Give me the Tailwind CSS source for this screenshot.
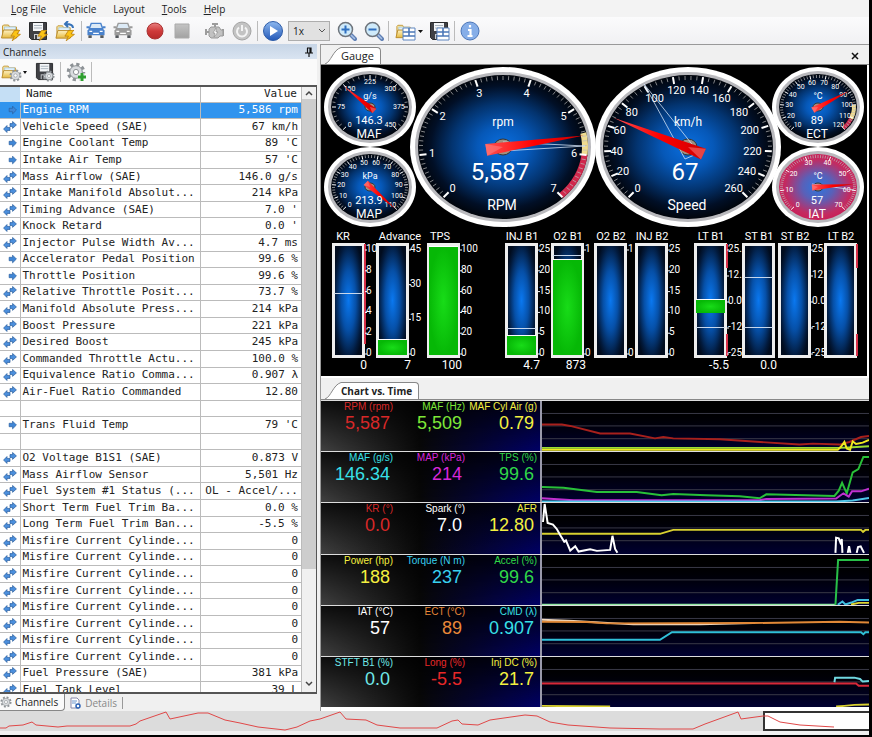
<!DOCTYPE html>
<html lang="en">
<head>
    <meta charset="UTF-8">
    <meta name="viewport" content="width=device-width, initial-scale=1.0">
    <title>Engine Scanner</title>
    <script src="https://cdn.jsdelivr.net/npm/@tailwindcss/browser@4"></script>
</head>
<body class="bg-black pr-[3px] pb-[2px] min-h-screen flex flex-col font-['Open_Sans',sans-serif] text-[10px] leading-4 text-[#222]">

    <!-- Shared icons -->
    <svg class="absolute w-0 h-0">
        <defs>
            <linearGradient id="folderFill" x2="0" y2="1"><stop stop-color="#fff3c4"/><stop offset="1" stop-color="#e5b93f"/></linearGradient>
            <linearGradient id="blueFill" x2="0" y2="1"><stop stop-color="#8db8ef"/><stop offset="1" stop-color="#2358b8"/></linearGradient>
            <linearGradient id="redFill" x2="0" y2="1"><stop stop-color="#e88080"/><stop offset=".5" stop-color="#cf3a3a"/><stop offset="1" stop-color="#b52a2a"/></linearGradient>
            <linearGradient id="grayFill" x2="0" y2="1"><stop stop-color="#c4c4c4"/><stop offset="1" stop-color="#a2a2a2"/></linearGradient>
            <symbol id="folder" viewBox="0 0 20 20">
                <path d="M2 17V5l1-1h5l1 2h7v4" fill="#f4e3a4" stroke="#c49a3c"/>
                <path d="M4 6h11v6H4z" fill="#dff0fb" stroke="#9cc3dc" stroke-width=".7"/>
                <path d="M1 17l2-8h15l-2 8z" fill="url(#folderFill)" stroke="#b98c2c"/>
            </symbol>
            <symbol id="floppy" viewBox="0 0 20 20">
                <path d="M1.500 1.500h17v17h-15l-2-2z" fill="#3f4044" stroke="#292a2c"/>
                <path d="M5 2h10v8H5z" fill="#f4f6f8"/>
                <path d="M6 4.500h8M6 7h8" stroke="#a9b3bd"/>
                <path d="M6 13h8v5H6z" fill="#c9ccd0"/>
                <path d="M7 14h2v4H7z" fill="#3f4044"/>
            </symbol>
            <symbol id="bolt" viewBox="0 0 10 10">
                <path d="M4 .5L9 0 6.500 3.500 9.500 4 2 9.800 4 5.500 .8 5.600z" fill="#fbc417" stroke="#b67a0c" stroke-width=".7"/>
            </symbol>
            <symbol id="gear" viewBox="0 0 20 20">
                <circle cx="10" cy="10" r="7.500" fill="none" stroke="#8d9296" stroke-width="3.500" stroke-dasharray="3.100 2.790"/>
                <circle cx="10" cy="10" r="6.300" fill="#d9dcdf" stroke="#8d9296"/>
                <circle cx="10" cy="10" r="2.600" fill="#fff" stroke="#8d9296"/>
            </symbol>
            <symbol id="car" viewBox="0 0 20 20">
                <path d="M5 2.500h10l2 5.500H3z" fill="#dceaf6" stroke="currentColor" stroke-width="1.500"/>
                <path d="M3 8h14l2 2v5H1v-5z" fill="currentColor"/>
                <path d="M0 6.500h3M17 6.500h3" stroke="currentColor" stroke-width="2"/>
                <path d="M3 11h3M14 11h3M7 13h6" stroke="#fff" stroke-width="1.400"/>
                <path d="M2 15h3.500v3H2zM14.500 15H18v3h-3.500z" fill="#55595e"/>
            </symbol>
            <symbol id="layout" viewBox="0 0 14 14">
                <path d="M1 1h12v12H1z" fill="#fff" stroke="#5f86bf"/>
                <path d="M1 5h12M1 9h12M7 1v8" stroke="#4c78b8" stroke-width="1.600"/>
            </symbol>
            <symbol id="lens" viewBox="0 0 20 20">
                <path d="M13 13l5 5" stroke="#5f7fb4" stroke-width="4" stroke-linecap="round"/>
                <path d="M14 14l3.500 3.500" stroke="#a9c1e6" stroke-width="1.500" stroke-linecap="round"/>
                <circle cx="8.500" cy="8.500" r="7" fill="#cfeafa" stroke="#6e747c" stroke-width="1.500"/>
            </symbol>
            <symbol id="one" viewBox="0 0 16 14">
                <path d="M7 5h4V2.500L15.500 7 11 11.500V9H7z" fill="#3f86d6" stroke="#2b5f9f" stroke-width=".8"/>
            </symbol>
            <symbol id="two" viewBox="0 0 16 14">
                <path d="M8 3h3V.600L15.500 4.600 11 8.600V6.500H8z" fill="#4b8fdd" stroke="#255a9a" stroke-width=".8"/>
                <path d="M8 7.500H4.500V5.300L.5 9.400l4 4V11H8z" fill="#4b8fdd" stroke="#255a9a" stroke-width=".8"/>
            </symbol>
        </defs>
    </svg>

    <!-- Menu -->
    <nav class="bg-[#f3f3f3] h-[17px] flex items-center gap-[17px] pl-[11px]">
        <button><u>L</u>og File</button>
        <button>Vehicle</button>
        <button>Layout</button>
        <button><u>T</u>ools</button>
        <button><u>H</u>elp</button>
    </nav>

    <!-- Main toolbar -->
    <div class="bg-gradient-to-b from-[#fbfbfc] to-[#f1f1f3] h-[27px] flex items-center gap-[3px]">
        <button class="w-6" aria-label="Open log"><svg class="w-6 h-5" viewBox="0 0 24 20"><use href="#folder" x="0" y="0" width="21" height="20"/><use href="#bolt" x="10" y="9" width="11" height="11"/></svg></button>
        <button class="w-6" aria-label="Save log"><svg class="w-6 h-5" viewBox="0 0 24 20"><use href="#floppy" x="1" y="0" width="20" height="20"/><use href="#bolt" x="10" y="9" width="11" height="11"/></svg></button>
        <button class="w-6" aria-label="Close log"><svg class="w-6 h-5" viewBox="0 0 24 20"><use href="#folder" x="0" y="1" width="21" height="19"/><use href="#bolt" x="10" y="9" width="11" height="11"/><path d="M19 7c0-4-4-4-7-4M14 0l-3 3 3 3" fill="none" stroke="#3672b8" stroke-width="2"/></svg></button>
        <span class="w-px h-5 bg-[#bbb]"></span>
        <button class="w-6 text-[#4a82cc]" aria-label="Connect"><svg class="w-6 h-5"><use href="#car" width="22" height="19"/></svg></button>
        <button class="w-6 text-[#9b9b9b]" aria-label="Disconnect"><svg class="w-6 h-5"><use href="#car" width="22" height="19"/></svg></button>
        <button class="w-6 ml-1" aria-label="Record"><svg class="w-6 h-5" viewBox="0 0 24 20"><circle cx="12" cy="10" r="8" fill="url(#redFill)" stroke="#a33"/></svg></button>
        <button class="w-6" aria-label="Stop"><svg class="w-6 h-5" viewBox="0 0 24 20"><path d="M5 3h14v14H5z" fill="url(#grayFill)" stroke="#aaa"/></svg></button>
        <button class="w-6 ml-1.5" aria-label="Engine"><svg class="w-6 h-5" viewBox="0 0 24 20"><path d="M9 3h6M12 3v3M3 8v6M3 11h3M20 8v7" stroke="#9c9c9c" stroke-width="2"/><path d="M6 8l2-2h8l2 3h2v6h-3l-2 2H8l-2-2z" fill="#c2c2c2" stroke="#999"/><path d="M13 7l-3 5h2l-1 4 4-5h-2z" fill="#fff" stroke="#888" stroke-width=".6"/></svg></button>
        <button class="w-6" aria-label="Power"><svg class="w-6 h-5" viewBox="0 0 24 20"><circle cx="12" cy="10" r="9" fill="#c3c3c3" stroke="#a4a4a4"/><path d="M12 4v6M9 6.500a5 5 0 1 0 6 0" fill="none" stroke="#f4f4f4" stroke-width="2"/></svg></button>
        <span class="w-px h-5 bg-[#bbb]"></span>
        <button class="w-6" aria-label="Play"><svg class="w-6 h-5" viewBox="0 0 24 20"><circle cx="12" cy="10" r="9.500" fill="url(#blueFill)" stroke="#2f5da8"/><path d="M9 5v10l8-5z" fill="#fff"/></svg></button>
        <div class="relative w-[42px] h-5">
            <select aria-label="Speed" class="appearance-none w-full h-full bg-[#e1e1e1] border border-[#adadad] pl-1 text-[10px] leading-4"><option>1x</option></select>
            <svg class="absolute right-1 top-1.5 w-2 h-2" viewBox="0 0 8 8"><path d="M1 2l3 3 3-3" fill="none" stroke="#555"/></svg>
        </div>
        <button class="w-6 ml-px" aria-label="Zoom in"><svg class="w-6 h-5" viewBox="0 0 24 20"><use href="#lens" x="3" width="20" height="20"/><path d="M7.500 8.500h8M11.500 4.500v8" stroke="#2f6fc0" stroke-width="2"/></svg></button>
        <button class="w-6" aria-label="Zoom out"><svg class="w-6 h-5" viewBox="0 0 24 20"><use href="#lens" x="3" width="20" height="20"/><path d="M7.500 8.500h8" stroke="#2f6fc0" stroke-width="2"/></svg></button>
        <span class="w-px h-5 bg-[#bbb]"></span>
        <button class="w-8" aria-label="Open layout"><svg class="w-8 h-5" viewBox="0 0 32 20"><use href="#folder" x="3" width="19" height="20"/><use href="#layout" x="10" y="6" width="14" height="14"/><path d="M26 9h5l-2.500 3z" fill="#111"/></svg></button>
        <button class="w-6" aria-label="Save layout"><svg class="w-6 h-5" viewBox="0 0 24 20"><use href="#floppy" x="2" width="20" height="20"/><use href="#layout" x="9" y="6" width="14" height="14"/></svg></button>
        <span class="w-px h-5 bg-[#bbb]"></span>
        <button class="w-6" aria-label="About"><svg class="w-6 h-5" viewBox="0 0 24 20"><circle cx="12" cy="10" r="9" fill="#86aee8" stroke="#4c76b8"/><path d="M12 4v2.500M10 9h2.500v6M9.500 15h5" fill="none" stroke="#fff" stroke-width="2.200"/></svg></button>
    </div>

    <main class="flex-1 flex bg-[#f0f0f0]">
        <!-- Channels panel -->
        <section class="w-[317px] shrink-0 flex flex-col">
            <header class="h-[15px] flex items-center justify-between bg-gradient-to-b from-[#c7d5e6] to-[#d9e4f1] pl-[3px] pr-1">
                <h2>Channels</h2>
                <button aria-label="Pin"><svg class="w-2 h-2.5" viewBox="0 0 8 10"><path d="M2 1h4v5M2.500 1v5M0 6h8M4 6v4M5 1v5" fill="none" stroke="#111" stroke-width="1.200"/></svg></button>
            </header>
            <div class="h-[26px] bg-[#fafafa] flex items-center gap-[3px]">
                <button class="w-[30px]" aria-label="Open channels"><svg class="w-[30px] h-5" viewBox="0 0 30 20"><use href="#folder" x="1" width="18" height="19"/><use href="#gear" x="9" y="7" width="13" height="13"/><path d="M23 9h4l-2 3z" fill="#111"/></svg></button>
                <button class="w-6" aria-label="Save channels"><svg class="w-6 h-5" viewBox="0 0 24 20"><use href="#floppy" x="2" width="19" height="19"/><use href="#gear" x="10" y="8" width="12" height="12"/></svg></button>
                <span class="w-px h-5 bg-[#bbb]"></span>
                <button class="w-6" aria-label="Add channel"><svg class="w-6 h-5" viewBox="0 0 24 20"><use href="#gear" x="2" width="20" height="20"/><path d="M18 11v8M14 15h8" stroke="#fff" stroke-width="5"/><path d="M18 11v8M14 15h8" stroke="#2f9e2f" stroke-width="3"/></svg></button>
                <span class="w-px h-5 bg-[#bbb]"></span>
            </div>
            <div class="h-[609px] flex bg-white border-y-2 border-r border-[#555] overflow-hidden">
                <div class="flex-1 overflow-hidden">
                    <table class="w-full h-[612px] table-fixed border-collapse font-['DejaVu_Sans_Mono',monospace] text-[11px] leading-[14px]">
                        <thead>
                            <tr class="h-[15px]">
                                <th class="w-5 p-0 bg-[#c5dff5]"></th>
                                <th class="p-0 text-left font-normal pl-[6px] border-b border-r border-[#bbb]">Name</th>
                                <th class="p-0 w-[101px] text-right font-normal pr-1 border-b border-r border-[#bbb]">Value</th>
                            </tr>
                        </thead>
                        <tbody id="channels"></tbody>
                    </table>
                </div>
                <div class="w-[14px] bg-[#f0f0f0] flex flex-col">
                    <button class="h-3 flex justify-center items-center" aria-label="Scroll up"><svg class="w-2 h-2" viewBox="0 0 8 8"><path d="M1 6l3-3 3 3" fill="none" stroke="#444" stroke-width="1.500"/></svg></button>
                    <div class="h-[470px] bg-[#cdcdcd]"></div>
                    <button class="mt-auto h-4 flex justify-center items-center" aria-label="Scroll down"><svg class="w-2 h-2" viewBox="0 0 8 8"><path d="M1 2l3 3 3-3" fill="none" stroke="#444" stroke-width="1.500"/></svg></button>
                </div>
            </div>
            <div class="h-[17px] flex items-center">
                <button class="h-full flex items-center gap-[3px] pr-[6px] bg-[#fafafa] border-r border-b border-[#888] rounded-br"><svg class="w-3 h-3"><use href="#gear"/></svg>Channels</button>
                <button class="flex items-center gap-[3px] px-[5px] text-[#888]"><svg class="w-3 h-3" viewBox="0 0 12 12"><path d="M1 1h6l2 2v8H1z" fill="#fff" stroke="#88a"/><path d="M2 4h5M2 6h4" stroke="#6a94cc"/><circle cx="8" cy="9" r="2" fill="#fff" stroke="#2c62b4" stroke-width="1.500"/></svg>Details</button>
                <span class="w-px h-3 bg-[#999]"></span>
            </div>
        </section>

        <!-- Gauges and charts -->
        <section class="flex-1 min-w-0 flex flex-col ml-[3px] border-l border-t border-[#999]">
            <div class="h-[20px] flex items-end border-b border-[#888] pl-1">
                <svg class="w-4 h-[17px]" viewBox="0 0 16 17"><path d="M0 17C6 15 8 3 16 .5V17z" fill="#fff"/><path d="M0 17C6 15 8 3 16 .5" fill="none" stroke="#888"/></svg>
                <button class="h-[17px] bg-white border-t border-r border-[#888] rounded-tr-sm pr-1.5 text-[11px]">Gauge</button>
                <button class="ml-auto mr-[10px] h-[17px]" aria-label="Close"><svg class="w-2 h-2" viewBox="0 0 8 8"><path d="M1 1l6 6M7 1L1 7" stroke="#111" stroke-width="1.500"/></svg></button>
            </div>
            <div class="bg-black border-r-2 border-b-2 border-white">
                <svg id="gauges" class="block w-full font-['Roboto',sans-serif]" viewBox="321 65 546 311" text-anchor="middle" fill="#fff">
                    <defs>
                        <radialGradient id="face"><stop stop-color="#0a6fe0"/><stop offset=".3" stop-color="#0658b8"/><stop offset=".6" stop-color="#033470"/><stop offset=".85" stop-color="#010f26"/><stop offset="1" stop-color="#01050c"/></radialGradient>
                        <radialGradient id="faceHot"><stop stop-color="#2a78e0"/><stop offset=".4" stop-color="#5a60b8"/><stop offset=".85" stop-color="#c42a60"/><stop offset="1" stop-color="#c82058"/></radialGradient>
                        <radialGradient id="tube" cx=".5" cy=".5" r=".6"><stop stop-color="#0a78f0"/><stop offset=".45" stop-color="#0650a8"/><stop offset=".85" stop-color="#021a3c"/><stop offset="1" stop-color="#010c1e"/></radialGradient>
                        <radialGradient id="level"><stop stop-color="#18dc18"/><stop offset="1" stop-color="#06b806"/></radialGradient>
                        <linearGradient id="needle"><stop stop-color="#ff5050"/><stop offset=".5" stop-color="#f00"/><stop offset="1" stop-color="#c00"/></linearGradient>
                    </defs>
                </svg>
            </div>
            <div class="h-[22px] flex items-end border-b border-[#888] pl-1">
                <svg class="w-4 h-[17px]" viewBox="0 0 16 17"><path d="M0 17C6 15 8 3 16 .5V17z" fill="#fff"/><path d="M0 17C6 15 8 3 16 .5" fill="none" stroke="#888"/></svg>
                <button class="h-[17px] bg-white border-t border-r border-[#888] rounded-tr-sm pr-1.5 font-bold">Chart vs. Time</button>
            </div>
            <div id="charts" class="grid grid-rows-6 h-[307px] bg-black font-['Liberation_Sans',sans-serif]"></div>
            <div class="flex-1 bg-white"></div>
        </section>
    </main>

    <!-- Log overview -->
    <footer class="bg-[#f0f0f0] pb-1">
        <svg class="block w-full h-5" viewBox="0 711 869 20" preserveAspectRatio="none">
            <path d="M0 711h869v20H0z" fill="#dcdcdc"/>
            <path d="M764 712h108v18H764z" fill="#fff" stroke="#333" stroke-width="2"/>
            <polyline fill="none" stroke="#e04848" points="0,728 6,728 9,726 23,725 32,722 36,725 58,727 67,726 130,726 136,724 140,721 166,712 170,719 198,713 208,713 225,720 240,723 258,727 285,730 297,727 310,721 320,719 340,712 346,719 366,720 377,725 400,728 437,728 452,721 458,720 462,724 478,725 490,720 525,715 537,716 550,722 568,725 610,728 660,729 693,729 705,724 738,712 741,719 763,716 768,716 780,722 800,725 834,727"/>
        </svg>
    </footer>

    <script>
        // Channel list: [icon, name, value]
        const channels = [
            ['one', 'Engine RPM', '5,586 rpm'],
            ['two', 'Vehicle Speed (SAE)', '67 km/h'],
            ['one', 'Engine Coolant Temp', "89 'C"],
            ['one', 'Intake Air Temp', "57 'C"],
            ['two', 'Mass Airflow (SAE)', '146.0 g/s'],
            ['two', 'Intake Manifold Absolut...', '214 kPa'],
            ['two', 'Timing Advance (SAE)', "7.0 '"],
            ['two', 'Knock Retard', "0.0 '"],
            ['two', 'Injector Pulse Width Av...', '4.7 ms'],
            ['one', 'Accelerator Pedal Position', '99.6 %'],
            ['one', 'Throttle Position', '99.6 %'],
            ['two', 'Relative Throttle Posit...', '73.7 %'],
            ['two', 'Manifold Absolute Press...', '214 kPa'],
            ['two', 'Boost Pressure', '221 kPa'],
            ['two', 'Desired Boost', '245 kPa'],
            ['two', 'Commanded Throttle Actu...', '100.0 %'],
            ['two', 'Equivalence Ratio Comma...', '0.907 λ'],
            ['two', 'Air-Fuel Ratio Commanded', '12.80'],
            ['', '', ''],
            ['one', 'Trans Fluid Temp', "79 'C"],
            ['', '', ''],
            ['two', 'O2 Voltage B1S1 (SAE)', '0.873 V'],
            ['two', 'Mass Airflow Sensor', '5,501 Hz'],
            ['two', 'Fuel System #1 Status (...', 'OL - Accel/...'],
            ['two', 'Short Term Fuel Trim Ba...', '0.0 %'],
            ['two', 'Long Term Fuel Trim Ban...', '-5.5 %'],
            ...Array(8).fill(['two', 'Misfire Current Cylinde...', '0']),
            ['two', 'Fuel Pressure (SAE)', '381 kPa'],
            ['two', 'Fuel Tank Level', '39 L']
        ];

        document.getElementById('channels').innerHTML = channels.map(([icon, name, value], i) => `
            <tr class="h-4 ${i === 0 ? 'bg-[#3194ee] text-white' : 'text-[#222]'}">
                <td class="p-0 border-b border-r border-[#bbb]">${icon ? `<svg class="block ml-[2px] w-4 h-3"><use href="#${icon}"/></svg>` : ''}</td>
                <td class="p-0 pl-[2px] border-b border-r border-[#bbb] whitespace-nowrap">${name}</td>
                <td class="p-0 pr-[3px] border-b border-r border-[#bbb] text-right whitespace-nowrap">${value}</td>
            </tr>`).join('');

        // Point on a dial: fraction 0..1 of the 270 degree sweep, at radii rx / ry
        function dialPoint(g, fraction, rx, ry) {
            const a = (135 + fraction * 270) * Math.PI / 180;
            return [g.cx + Math.cos(a) * rx, g.cy + Math.sin(a) * ry].map(n => +n.toFixed(1));
        }

        function arc(g, from, to, color) {
            const rx = g.rx - 3, ry = g.ry - 3;
            const [x1, y1] = dialPoint(g, from, rx, ry);
            const [x2, y2] = dialPoint(g, to, rx, ry);
            return `<path d="M${x1} ${y1}A${rx} ${ry} 0 0 1 ${x2} ${y2}" fill="none" stroke="${color}" stroke-width="${g.big ? 6 : 4}"/>`;
        }

        function needle(g, fraction) {
            const a = (135 + fraction * 270) * Math.PI / 180;
            const tail = g.big ? 17 : 6, half = g.big ? 6 : 3;
            const [tx, ty] = dialPoint(g, fraction, g.rx - 3, g.ry - 2);
            const bx = g.cx - Math.cos(a) * tail, by = g.cy - Math.sin(a) * tail;
            const dx = -Math.sin(a) * half, dy = Math.cos(a) * half;
            return `<polygon points="${tx},${ty} ${bx + dx},${by + dy} ${bx - dx},${by - dy}" fill="url(#needle)"/>
                <polygon points="${g.cx},${g.cy} ${bx + dx},${by + dy} ${bx - dx},${by - dy}" fill="#f88" fill-opacity=".5"/>`;
        }

        function drawDial(g) {
            g.rx = g.big ? 85 : 39;
            g.ry = g.big ? 72 : 33;
            const edge = g.big ? 8 : 7;
            let s = `<ellipse cx="${g.cx}" cy="${g.cy}" rx="${g.rx + edge}" ry="${g.ry + edge}" fill="#fff"/>
                <ellipse cx="${g.cx}" cy="${g.cy}" rx="${g.rx + 3}" ry="${g.ry + 3}" fill="#b9b9bd"/>
                <ellipse cx="${g.cx}" cy="${g.cy}" rx="${g.rx}" ry="${g.ry}" fill="url(#${g.face || 'face'})"/>`;
            (g.zones || []).forEach(z => s += arc(g, ...z));
            const steps = (g.labels.length - 1) * g.minor;
            for (let i = 0; i <= steps; i++) {
                const major = i % g.minor === 0;
                const len = g.big ? (major ? 7 : 4) : (major ? 4 : 3);
                const [x1, y1] = dialPoint(g, i / steps, g.rx - 1, g.ry - 1);
                const [x2, y2] = dialPoint(g, i / steps, g.rx - 1 - len, g.ry - 1 - len);
                s += `<path d="M${x1} ${y1}L${x2} ${y2}" stroke="${major ? '#fff' : '#bbb'}" stroke-width="${major && g.big ? 2 : 1}" stroke-opacity="${major ? 1 : .7}"/>`;
            }
            g.labels.forEach((label, i) => {
                const wide = g.big && String(label).length > 2 ? .08 : 0;
                const [x, y] = dialPoint(g, i / (g.labels.length - 1), g.rx * ((g.big ? .84 : .74) - wide), g.ry * (g.big ? .8 : .76));
                s += `<text x="${x}" y="${y}" dy="${g.big ? 4 : 2}" font-size="${g.big ? 11 : 7}">${label}</text>`;
            });
            s += `<text x="${g.cx}" y="${g.cy + (g.big ? -21 : -8)}" font-size="${g.big ? 12 : 9}">${g.unit}</text>`;
            s += `<ellipse cx="${g.cx}" cy="${g.cy}" rx="${g.big ? 9 : 5}" ry="${g.big ? 8 : 4}" fill="#a09080" stroke="#333"/>`;
            if (g.trail) s += `<path d="${g.trail}" fill="none" stroke="#cfe0f4" stroke-width=".8"/>`;
            s += needle(g, g.at);
            s += `<text x="${g.cx - (g.big ? 3 : 1)}" y="${g.cy + (g.big ? 33 : 17)}" font-size="${g.big ? 24 : 11}">${g.value}</text>`;
            s += `<text x="${g.cx - 1}" y="${g.cy + (g.big ? 63 : 31)}" font-size="${g.big ? 14 : 12}">${g.name}</text>`;
            return s;
        }

        const range = (from, to, step) => Array.from({ length: (to - from) / step + 1 }, (_, i) => from + i * step);

        const dials = [
            { name: 'MAF', unit: 'g/s', value: '146.3', at: .325, cx: 370, cy: 107, minor: 5, labels: range(0, 450, 75) },
            { name: 'MAP', unit: 'kPa', value: '213.9', at: 1, cx: 370, cy: 187, minor: 5, labels: range(0, 110, 10) },
            { name: 'ECT', unit: '°C', value: '89', at: .718, cx: 818, cy: 107, minor: 5, labels: range(10, 120, 10), zones: [[.82, .92, '#f0dc90'], [.92, 1, '#c8284c']] },
            { name: 'IAT', unit: '°C', value: '57', at: .814, cx: 818, cy: 187, minor: 10, labels: range(0, 70, 10), face: 'faceHot', trail: 'M812 184l42 6' },
            { name: 'RPM', unit: 'rpm', value: '5,587', at: .798, cx: 503, cy: 147, big: true, minor: 10, labels: range(0, 7, 1), zones: [[.79, .857, '#f0dc90'], [.857, 1, '#d0284c']], trail: 'M503 142l82 4l-82 5' },
            { name: 'Speed', unit: 'km/h', value: '67', at: .258, cx: 688, cy: 147, big: true, minor: 5, labels: range(0, 260, 20), trail: 'M644 84l41 75l14-6z' }
        ];

        // Vertical bars: x, title, value under the bar, scale labels top to bottom,
        // fill [top, height] and marker lines in bar pixels
        const bars = [
            { x: 332, title: 'KR', value: '0', scale: [10, 8, 6, 4, 2, 0], marks: [51], red: [[244, 100]], tx: 343 },
            { x: 376, title: 'Advance', value: '7', scale: [45, 30, 15, 0], fill: [97, 18], tx: 400 },
            { x: 427, title: 'TPS', value: '100', scale: [100, 80, 60, 40, 20, 0], fill: [4, 111], tx: 440 },
            { x: 505, title: 'INJ B1', value: '4.7', scale: [25, 20, 15, 10, 5, 0], fill: [93, 22], marks: [86] },
            { x: 551, title: 'O2 B1', value: '873', scale: [1, 0], fill: [17, 98], marks: [13] },
            { x: 594, title: 'O2 B2', value: '', scale: [1, 0] },
            { x: 635, title: 'INJ B2', value: '', scale: [25, 20, 15, 10, 5, 0] },
            { x: 694, title: 'LT B1', value: '-5.5', scale: ['25.', '12.', '0.0', '-12', '-25'], fill: [57, 13], marks: [85], red: [[244, 24], [334, 22]] },
            { x: 742, title: 'ST B1', value: '0.0', scale: [], marks: [35, 85] },
            { x: 778, title: 'ST B2', value: '', scale: ['25.', '12.', '0.0', '-12', '-25'] },
            { x: 824, title: 'LT B2', value: '', scale: [], red: [[244, 24], [334, 22]] }
        ];

        function drawBar(b) {
            let s = `<rect x="${b.x}" y="243" width="33" height="115" fill="#eee"/>
                <rect x="${b.x + 3}" y="246" width="27" height="109" fill="url(#tube)"/>
                <text x="${b.tx || b.x + 17}" y="240" font-size="11">${b.title}</text>
                <text x="${b.x + 35}" y="369" font-size="12" text-anchor="end">${b.value}</text>`;
            if (b.fill) {
                const h = Math.min(b.fill[1], 355 - 243 - b.fill[0]);
                s += `<rect x="${b.x + 2}" y="${243 + b.fill[0]}" width="29" height="${h}" fill="url(#level)"/>
                    <path d="M${b.x + 2} ${242.5 + b.fill[0]}h29" stroke="#fff"/>`;
            }
            (b.marks || []).forEach(m => s += `<path d="M${b.x + 2} ${242.5 + m}h29" stroke="#c8d8ec"/>`);
            (b.red || []).forEach(r => s += `<path d="M${b.x + 33} ${r[0]}v${r[1]}" stroke="#d83048" stroke-width="2"/>`);
            b.scale.forEach((label, i) => {
                const y = 248 + i * 104 / (b.scale.length - 1);
                s += `<path d="M${b.x + 33} ${y + 2}h2" stroke="#fff"/>
                    <text x="${b.x + 34}" y="${y + 4}" font-size="10" text-anchor="start">${label}</text>`;
            });
            return s;
        }

        document.getElementById('gauges').innerHTML += dials.map(drawDial).join('') + bars.map(drawBar).join('');

        // Chart rows: readouts [label, value, text class] and traces [color, points]
        const rows = [
            { top: 15, cells: [['RPM (rpm)', '5,587', 'text-[#d82828]'], ['MAF (Hz)', '5,509', 'text-[#7ee838]'], ['MAF Cyl Air (g)', '0.79', 'text-[#f4f040]']],
              lines: [['#a8201c', '5,87 65,87 90,91 180,114 270,114 345,129 370,125 400,129 540,132 780,148 820,145 900,148 930,140 965,125 989,122'],
                      ['#9adc30', '5,158 900,158 940,156 989,153'],
                      ['#f0e820', '5,164 895,164 905,154 915,140 922,160 932,164 940,138 950,146 970,142 989,134']] },
            { top: 168, cells: [['MAF (g/s)', '146.34', 'text-[#38e0e8]'], ['MAP (kPa)', '214', 'text-[#d828d8]'], ['TPS (%)', '99.6', 'text-[#30d848]']],
              lines: [['#28c038', '5,275 70,277 170,290 290,290 365,300 400,296 500,300 600,303 660,309 680,297 885,302 898,286 908,262 922,294 940,230 957,220 972,183 989,183'],
                      ['#c030d0', '5,309 100,315 660,315 680,311 890,310 912,294 928,304 938,288 965,288 989,280'],
                      ['#50c8e8', '5,319 890,319 940,316 989,308']] },
            { top: 322, cells: [['KR (°)', '0.0', 'text-[#d82828]'], ['Spark (°)', '7.0', 'text-white'], ['AFR', '12.80', 'text-[#f4f040]']],
              lines: [['#d8d030', '5,416 360,416 400,404 965,404 971,410 978,404 989,404'],
                      ['#ffffff', '8,380 13,325 22,383 38,388 50,402 60,420 72,440 77,436 90,467 105,454 115,470 150,463 170,468 210,465 217,422 225,462 232,474'],
                      ['#ffffff', '888,474 890,428 898,430 903,443 907,432 909,474'],
                      ['#ffffff', '925,474 929,454 933,474'], ['#ffffff', '952,474 956,456 964,454 974,474']] },
            { top: 475, cells: [['Power (hp)', '188', 'text-[#f4f040]'], ['Torque (N m)', '237', 'text-[#38d0f0]'], ['Accel (%)', '99.6', 'text-[#30d848]']],
              lines: [['#90e8a0', '5,627 888,627'], ['#28c048', '888,627 896,490 989,490'],
                      ['#40c0e0', '895,627 909,617 918,626 936,620 955,612 989,612'], ['#e0d830', '935,626 958,621 989,621']] },
            { top: 628, cells: [['IAT (°C)', '57', 'text-white'], ['ECT (°C)', '89', 'text-[#e88838]'], ['CMD (λ)', '0.907', 'text-[#38e0e8]']],
              lines: [['#f0d8c0', '5,670 100,674 280,684 480,684 640,680'], ['#e08838', '5,676 140,677 200,681 640,680 900,676 989,678'],
                      ['#30c0d8', '5,731 360,731 396,708 965,708 972,714 978,708 989,708']] },
            { top: 781, cells: [['STFT B1 (%)', '0.0', 'text-[#70e8e8]'], ['Long (%)', '-5.5', 'text-[#e82828]'], ['Inj DC (%)', '21.7', 'text-[#f4f040]']],
              lines: [['#d82838', '5,862 950,862 958,869 989,869'], ['#70d8e0', '885,858 887,844 945,844 962,848 970,856 989,854'],
                      ['#d8d030', '5,930 210,932'], ['#d8d030', '890,932 915,930 945,927 989,926']] }
        ];

        document.getElementById('charts').innerHTML = rows.map(r => `
            <div class="flex min-h-0 border-t border-[#ddd]">
                <div class="w-[221px] shrink-0 grid grid-cols-3 pr-[3px] text-right whitespace-nowrap border-r-2 border-[#99a] bg-[linear-gradient(to_bottom,#000000cc,transparent),linear-gradient(to_right,#404040,#080808_45%,#000066)]">
                    ${r.cells.map(([label, value, color]) => `
                        <div class="${color}">
                            <div class="text-[10px] leading-[11px]">${label}</div>
                            <div class="text-[18px] leading-[22px] pr-[3px]">${value}</div>
                        </div>`).join('')}
                </div>
                <svg class="flex-1 min-w-0 h-full bg-gradient-to-b from-black to-[#000030]" viewBox="5 ${r.top} 984 153" preserveAspectRatio="none" fill="none">
                    <path d="M5 ${r.top + 38}h984M5 ${r.top + 76}h984M5 ${r.top + 115}h984" stroke="#3a3a48" stroke-width="3"/>
                    ${r.lines.map(([color, points]) => `<polyline points="${points}" stroke="${color}" stroke-width="6"/>`).join('')}
                </svg>
            </div>`).join('');
    </script>
</body>
</html>
